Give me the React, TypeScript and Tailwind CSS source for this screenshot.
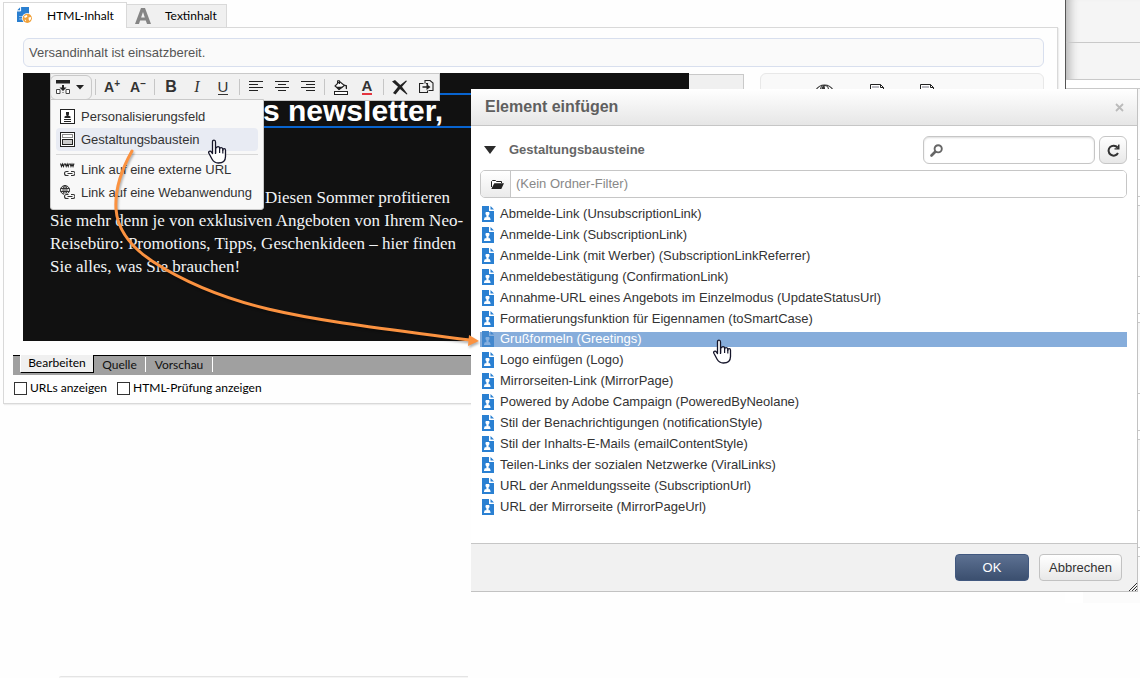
import React from "react";

const arial = "font-['Liberation_Sans',Arial,sans-serif]";
const segoe = "font-['Lato','Open_Sans',sans-serif]";

const blocks = [
  "Abmelde-Link (UnsubscriptionLink)",
  "Anmelde-Link (SubscriptionLink)",
  "Anmelde-Link (mit Werber) (SubscriptionLinkReferrer)",
  "Anmeldebestätigung (ConfirmationLink)",
  "Annahme-URL eines Angebots im Einzelmodus (UpdateStatusUrl)",
  "Formatierungsfunktion für Eigennamen (toSmartCase)",
  "Grußformeln (Greetings)",
  "Logo einfügen (Logo)",
  "Mirrorseiten-Link (MirrorPage)",
  "Powered by Adobe Campaign (PoweredByNeolane)",
  "Stil der Benachrichtigungen (notificationStyle)",
  "Stil der Inhalts-E-Mails (emailContentStyle)",
  "Teilen-Links der sozialen Netzwerke (ViralLinks)",
  "URL der Anmeldungsseite (SubscriptionUrl)",
  "URL der Mirrorseite (MirrorPageUrl)",
];
const selectedBlock = "Grußformeln (Greetings)";

function HtmlTabIcon() {
  return (
    <svg width="16" height="17" viewBox="0 0 16 17" aria-hidden="true">
      <path d="M4 0h8v15H0V4h4z" fill="#2a7fd0" />
      <path d="M0 3.4L3.4 0v3.4z" fill="#2a7fd0" />
      <path d="M3.6 0v4H0" fill="none" stroke="#fff" strokeWidth=".9" />
      <path d="M2 9.5h4M2 12h3" stroke="#8fbde8" />
      <circle cx="10.3" cy="11.3" r="5.4" fill="#fff" />
      <circle cx="10.3" cy="11.3" r="4.6" fill="#f0a13a" />
      <path d="M7.300 8.900l2.600-.8.5 1.400-1.600 1.300-1.500-.2zM11.500 10.500l2.400-.5.1 1.900-1.500 2-.8-1.500zM7.600 12.400l1.600.6-.4 1.500z" fill="#fff" />
    </svg>
  );
}

function BlockIcon({ faded = false }: { faded?: boolean }) {
  return (
    <svg width="12" height="16" viewBox="0 0 12 16" aria-hidden="true" className="shrink-0">
      <path d="M0 0h7v5h5v11H0z" fill={faded ? "#4287cd" : "#2a80d2"} />
      <path d="M8.500 0L12 3.500H8.500z" fill={faded ? "#4287cd" : "#2a80d2"} />
      <path
        d="M5 6h2l.5.800v1.400L6.600 9.300v1.900H8V12.500H8.500V14H2v-1.500h.6v-1.300h1.800V9.300l-.9-1.100V6.800L4 6z"
        fill={faded ? "#86b0e0" : "#fff"}
      />
    </svg>
  );
}

function Hand() {
  return (
    <svg width="19" height="25" viewBox="0 0 19 25" aria-hidden="true">
      <path
        d="M7.500 15V3c0-2.600-3-2.600-3 0v11.500l-1-1.400c-1.300-1.800-3.500-.7-2.600 1.200l3.200 6c1.400 2.500 3 3.700 6.200 3.700 4.600 0 7.200-2.400 7.200-6.500V11.300c0-2.200-2.700-2.200-2.700 0V10.300c0-2.300-3.200-2.300-3.200-.2V9.300c0-2.200-3.100-2.200-3.100 0"
        fill="#fff"
        stroke="#15152a"
        strokeWidth="1.300"
        strokeLinejoin="round"
      />
      <path d="M7.600 9v5M11.600 9.500v4.500M14.800 10.500v4" stroke="#15152a" strokeWidth="1.200" />
    </svg>
  );
}

function AlignIcon({ rows }: { rows: [number, number][] }) {
  return (
    <svg width="14" height="12" viewBox="0 0 14 12" aria-hidden="true">
      {rows.map(([x, w], i) => (
        <rect key={i} x={x} y={i * 3} width={w} height="1" fill="#222" />
      ))}
    </svg>
  );
}

function ToolButton({ label, children }: { label: string; children: React.ReactNode }) {
  return (
    <button type="button" aria-label={label} className="flex h-full w-[26px] items-center justify-center">
      {children}
    </button>
  );
}

function Divider() {
  return <span className="mx-[3px] h-4 w-px bg-[#c6c6c6]" />;
}

function ChainLink() {
  return (
    <path
      d="M8.500 9.500H6.500a2 2 0 000 4h2M11 9.500h2a2 2 0 010 4h-2M7.500 11.500h5"
      fill="none"
      stroke="#333"
      strokeWidth="1.100"
    />
  );
}

function MenuItem({ icon, label, active = false }: { icon: React.ReactNode; label: string; active?: boolean }) {
  return (
    <li>
      <button
        type="button"
        className={`flex h-[23px] w-full items-center gap-[6px] rounded pl-1 text-left ${active ? "bg-[#e8ebf3]" : ""}`}
      >
        {icon}
        <span>{label}</span>
      </button>
    </li>
  );
}

function InsertMenu() {
  return (
    <ul className="absolute top-[26px] left-[27px] w-[214px] rounded-b-[3px] border border-[#c9c9c9] bg-[#f8f8f8] px-[5px] pt-[5px] pb-[5px] text-[13px] text-[#333]">
      <MenuItem
        label="Personalisierungsfeld"
        icon={
          <svg width="15" height="15" viewBox="0 0 15 15" aria-hidden="true">
            <rect x=".5" y=".5" width="14" height="14" fill="#fff" stroke="#222" />
            <path d="M6 3h3v2.500L8.200 6.500 10.500 7.500V9h-6V7.500l2.300-1L6 5.500z" fill="#222" />
            <path d="M4 10h7v1H4zM4 12h7v1H4z" fill="#222" />
          </svg>
        }
      />
      <MenuItem
        active
        label="Gestaltungsbaustein"
        icon={
          <svg width="15" height="15" viewBox="0 0 15 15" aria-hidden="true">
            <rect x=".5" y=".5" width="14" height="14" fill="#fff" stroke="#222" />
            <rect x="2.500" y="2.500" width="10" height="3" fill="#fff" stroke="#888" />
            <rect x="2.500" y="7.500" width="10" height="5" fill="#ccc" stroke="#222" />
          </svg>
        }
      />
      <li aria-hidden="true" className="my-[3px] h-px bg-[#d8d8d8]" />
      <MenuItem
        label="Link auf eine externe URL"
        icon={
          <svg width="15" height="15" viewBox="0 0 15 15" aria-hidden="true">
            <path
              d="M.5 1.500l1 3 1-2.500 1 2.500 1-3M5.200 1.500l1 3 1-2.500 1 2.500 1-3M10 1.500l1 3 1-2.500 1 2.500 1-3"
              fill="none"
              stroke="#222"
              strokeWidth="1.100"
            />
            <ChainLink />
          </svg>
        }
      />
      <MenuItem
        label="Link auf eine Webanwendung"
        icon={
          <svg width="15" height="15" viewBox="0 0 15 15" aria-hidden="true">
            <circle cx="5" cy="5" r="4.500" fill="none" stroke="#333" />
            <ellipse cx="5" cy="5" rx="2" ry="4.500" fill="none" stroke="#333" />
            <path d="M.5 3.500h9M.5 6.500h9M5 .5v9" stroke="#333" />
            <rect x="4" y="8.500" width="11" height="6" fill="#f8f8f8" />
            <ChainLink />
          </svg>
        }
      />
    </ul>
  );
}

function Toolbar() {
  return (
    <div className="absolute top-0 left-[27px] flex h-7 items-center border border-[#c9c9c9] bg-[#f1f1f1] text-[#333]">
      <button
        type="button"
        aria-label="Einfügen"
        className="-ml-px flex h-[25px] w-[42px] items-center gap-[6px] rounded-md border border-[#c9c9c9] pl-[5px]"
      >
        <svg width="14" height="14" viewBox="0 0 14 14" aria-hidden="true">
          <path d="M0 0h14v3.500H0zM6 5h2v2.500h2.500L7 11 3.500 7.500H6z" fill="#222" />
          <path d="M.5 9.500h3.500v4H.5zM10 9.500h3.500v4H10z" fill="#fff" stroke="#444" />
          <path d="M6.500 12.500h1" stroke="#444" />
        </svg>
        <svg width="8" height="5" viewBox="0 0 8 5" aria-hidden="true">
          <path d="M0 0h8L4 4.500z" fill="#222" />
        </svg>
      </button>
      <Divider />
      <ToolButton label="Schrift vergrößern">
        <span className="flex text-[14px] leading-4 font-bold">
          A<sup className="top-0 text-[10px] leading-[9px]">+</sup>
        </span>
      </ToolButton>
      <ToolButton label="Schrift verkleinern">
        <span className="flex text-[14px] leading-4 font-bold">
          A<sup className="top-0 text-[10px] leading-[9px]">−</sup>
        </span>
      </ToolButton>
      <Divider />
      <ToolButton label="Fett">
        <span className="text-[16px] leading-4 font-bold">B</span>
      </ToolButton>
      <ToolButton label="Kursiv">
        <span className="font-['Liberation_Serif',serif] text-[16px] leading-4 italic">I</span>
      </ToolButton>
      <ToolButton label="Unterstrichen">
        <span className="border-b border-[#333] text-[15px] leading-[14px]">U</span>
      </ToolButton>
      <Divider />
      <ToolButton label="Linksbündig">
        <AlignIcon rows={[[0, 14], [0, 9], [0, 14], [0, 9]]} />
      </ToolButton>
      <ToolButton label="Zentriert">
        <AlignIcon rows={[[0, 14], [3, 8], [0, 14], [3, 8]]} />
      </ToolButton>
      <ToolButton label="Rechtsbündig">
        <AlignIcon rows={[[0, 14], [5, 9], [0, 14], [5, 9]]} />
      </ToolButton>
      <Divider />
      <ToolButton label="Hintergrundfarbe">
        <svg width="16" height="15" viewBox="0 0 16 15" aria-hidden="true">
          <path d="M6.500 1.500l5 4-5.500 4L2 6z" fill="#fff" stroke="#222" strokeWidth="1.100" />
          <path d="M3 6.800h7.500L6 10zM11 4.500l3 .8v4l-1.300-.5V6.500z" fill="#222" />
          <path d="M4.500 4V.7h2V4" fill="none" stroke="#222" />
          <rect x="1.500" y="11.500" width="13" height="3" fill="#fff" stroke="#222" />
        </svg>
      </ToolButton>
      <ToolButton label="Schriftfarbe">
        <span className="border-b-2 border-[#e5353f] text-[15px] leading-[14px] font-bold">A</span>
      </ToolButton>
      <Divider />
      <ToolButton label="Formatierung entfernen">
        <svg width="16" height="15" viewBox="0 0 16 15" aria-hidden="true">
          <path d="M0 1.500L3 0l5.300 5L14 .5l1 .5-5 5.800 5.500 7.200-.8.5L8 9l-4.500 5.500-2.500-1.500 5-6.200z" fill="#222" />
        </svg>
      </ToolButton>
      <ToolButton label="Inhalt übernehmen">
        <svg width="15" height="14" viewBox="0 0 15 14" aria-hidden="true">
          <path d="M6 3.500V.5h5l3 2.500v7.500H9.500M4.500 3.500h-4v9h8v-2M8.500 5V3.500H7" fill="none" stroke="#222" strokeWidth="1.100" />
          <path d="M3.500 6.200h4V4l4 3-4 3V7.800h-4z" fill="#222" />
        </svg>
      </ToolButton>
    </div>
  );
}

function PreviewPanel() {
  return (
    <div className="flex w-[284px] shrink-0 items-start gap-9 rounded-md border border-[#e8e8e8] bg-[#f9f9f9] pt-[10px] pl-[54px]">
      <svg width="19" height="12" viewBox="0 0 19 12" aria-hidden="true">
        <path d="M.5 6.500C5-.8 14-.8 18.500 6.500C14 13 5 13 .5 6.500z" fill="#fff" stroke="#333" strokeWidth="1.100" />
        <circle cx="9.500" cy="5.500" r="4" fill="none" stroke="#333" strokeWidth="1.100" />
        <path d="M9.500 1.500a4 4 0 00-2.500 6h3V4.500z" fill="#333" />
      </svg>
      {[0, 1].map((i) => (
        <svg key={i} width="14" height="16" viewBox="0 0 14 16" aria-hidden="true">
          <path d="M.5.5h10l3 3v12H.5z" fill="#fff" stroke="#222" />
          <path d="M10.500.5v3h3" fill="none" stroke="#222" />
          <path d="M2 3h7" stroke="#b9b9c0" strokeWidth="2" />
        </svg>
      ))}
    </div>
  );
}

function EditorWindow() {
  return (
    <main className="min-w-0 flex-1 pt-[2px] pr-[7px] pl-[3px]">
      <div role="tablist" className={`flex h-[25px] items-end text-[12px] text-black ${segoe}`}>
        <button
          type="button"
          role="tab"
          aria-selected="true"
          className="relative -mb-px flex h-[26px] w-[124px] items-center gap-[14px] border border-b-0 border-[#d9d9d9] bg-white pl-[13px]"
        >
          <HtmlTabIcon />
          HTML-Inhalt
        </button>
        <button
          type="button"
          role="tab"
          aria-selected="false"
          className="-ml-px flex h-[23px] w-[101px] items-center gap-[14px] border border-b-0 border-[#d9d9d9] bg-[#f0f0f0] pl-2"
        >
          <svg width="16" height="16" viewBox="0 0 16 16" aria-hidden="true">
            <path d="M0 16L6 0h4l6 16h-4l-1.200-3.500H5.100L4 16zM6.100 9.500h3.700L8 4z" fill="#858585" fillRule="evenodd" />
          </svg>
          Textinhalt
        </button>
      </div>

      <div className="border border-[#d9d9d9] pt-[10px] shadow-[1px_1px_1px_#eeeeee]">
        <p className="mr-[13px] ml-[19px] flex h-[29px] items-center rounded-md border border-[#d8dfee] bg-[#fafafa] pl-[5px] text-[13px] text-[#555]">
          Versandinhalt ist einsatzbereit.
        </p>

        <div className="mt-[6px] mr-[13px] ml-[19px] flex gap-4">
          <div className="relative flex h-[268px] min-w-0 flex-1">
            <article className="min-w-0 flex-1 overflow-hidden bg-[#111] pt-5 text-white">
              <h1 className="ml-[240px] border-y-2 border-[#0864d0] text-[30px] leading-[31px] font-bold whitespace-nowrap">
                s newsletter,
              </h1>
              <p className="mt-[58px] pl-[27px] indent-[215px] font-['Liberation_Serif','Times_New_Roman',serif] text-[17px] leading-[23px] whitespace-nowrap text-[#f1f4f6]">
                Diesen Sommer profitieren
                <br />
                <span className="block indent-0">
                  Sie mehr denn je von exklusiven Angeboten von Ihrem Neo-
                  <br />
                  Reisebüro: Promotions, Tipps, Geschenkideen – hier finden
                  <br />
                  Sie alles, was Sie brauchen!
                </span>
              </p>
            </article>
            <aside className="mt-px w-[55px] border-t border-r border-[#c9c9c9] bg-[#f0f0f0]" />
            <Toolbar />
            <InsertMenu />
            <span className="absolute top-[66px] left-[185px]">
              <Hand />
            </span>
          </div>
          <PreviewPanel />
        </div>

        <div className={`mt-[14px] ml-[9px] flex h-5 items-start border-t border-black bg-[#a0a0a0] pl-[7px] text-[12px] leading-4 ${segoe}`}>
          <button type="button" className="-mt-px h-[18px] w-[74px] border-r border-b border-l border-black border-l-white bg-[#f0f0f0] pb-[2px] text-black">
            Bearbeiten
          </button>
          <button type="button" className="mt-px h-[15px] w-[52px] border-r border-white pb-[2px] text-[#111]">
            Quelle
          </button>
          <button type="button" className="mt-px h-[15px] w-[67px] border-r border-white pb-[2px] text-[#111]">
            Vorschau
          </button>
        </div>

        <div className={`flex h-7 items-center gap-[10px] pb-[2px] pl-[10px] text-[12px] text-black ${segoe}`}>
          {["URLs anzeigen", "HTML-Prüfung anzeigen"].map((label) => (
            <label key={label} className="flex items-center gap-[3px]">
              <input type="checkbox" className="size-[13px] appearance-none border border-[#333] bg-white" />
              {label}
            </label>
          ))}
        </div>
      </div>
    </main>
  );
}

function Backdrop() {
  const line = "border-b border-[#c9c9c9]";
  return (
    <div className="w-[75px] shrink-0 bg-white">
      <div className="border-l border-[#555]">
        <div className="bg-[#f5f5f5] shadow-[inset_12px_0_10px_-8px_#b5b5b5]">
          <div className={`h-[43px] ${line}`} />
          <div className={`h-[37px] ${line}`} />
        </div>
        <div className={`h-[9px] ${line}`} />
      </div>
      {[0, 1, 2, 3].map((row) => (
        <div key={row}>
          <div className={`h-[71px] bg-linear-to-b from-[#f6f6f6] to-white ${line}`} />
          <div className={`h-[37px] ${line}`} />
          <div className={`h-[9px] ${line}`} />
        </div>
      ))}
      <div className="ml-[18px] h-[46px] bg-[#fbfbfb]" />
    </div>
  );
}

function InsertDialog() {
  return (
    <section
      role="dialog"
      aria-label="Element einfügen"
      className="absolute top-[89px] right-[2px] left-[471px] flex flex-col border-r border-b border-[#c2c2c2] bg-white"
    >
      <header className="flex h-[37px] items-center justify-between border-b border-[#c6c6c6] bg-linear-to-b from-white to-[#e6e6e6] pr-[13px] pl-[14px]">
        <h2 className="text-[16px] font-bold text-[#5f5f5f]">Element einfügen</h2>
        <button type="button" aria-label="Schließen">
          <svg width="9" height="9" viewBox="0 0 9 9" aria-hidden="true">
            <path d="M1 1l7 7M8 1L1 8" stroke="#bbb" strokeWidth="1.800" />
          </svg>
        </button>
      </header>

      <div className="h-[417px] pt-[10px] pr-[10px] pl-[9px]">
        <div className="flex items-center gap-1">
          <button type="button" className="flex flex-1 items-center gap-[13px] pl-1 text-left text-[13px] font-bold text-[#666]">
            <svg width="12" height="8" viewBox="0 0 12 8" aria-hidden="true">
              <path d="M0 0h12L6 8z" fill="#2b2b2b" />
            </svg>
            Gestaltungsbausteine
          </button>
          <label className="flex h-7 w-[172px] items-center rounded-md border border-[#c6c6c6] bg-white pl-[6px] shadow-[inset_0_1px_2px_#dddddd]">
            <svg width="13" height="13" viewBox="0 0 13 13" aria-hidden="true">
              <circle cx="8.200" cy="4.800" r="3.600" fill="none" stroke="#666" strokeWidth="1.900" />
              <path d="M5 8L1.500 11.500" stroke="#666" strokeWidth="2.600" strokeLinecap="round" />
            </svg>
            <input type="text" aria-label="Suchen" className="min-w-0 flex-1 bg-transparent px-1 text-[13px] outline-none" />
          </label>
          <button
            type="button"
            aria-label="Aktualisieren"
            className="flex size-7 items-center justify-center rounded-md border border-[#c6c6c6] bg-linear-to-b from-white to-[#e8e8e8]"
          >
            <svg width="13" height="13" viewBox="0 0 13 13" aria-hidden="true">
              <path d="M10.500 3.500A5 5 0 1011 9" fill="none" stroke="#333" strokeWidth="2" />
              <path d="M12.500.5V5.500H7.500V4.200h2.500L11.300.5z" fill="#333" />
            </svg>
          </button>
        </div>

        <div className="mt-[6px] flex h-7 overflow-hidden rounded-[5px] border border-[#c6c6c6]">
          <button
            type="button"
            aria-label="Ordner wählen"
            className="flex w-[30px] items-center justify-center border-r border-[#c6c6c6] bg-linear-to-b from-white to-[#ebebeb] pl-[3px]"
          >
            <svg width="13" height="9" viewBox="0 0 13 9" aria-hidden="true">
              <path d="M.5 7V1.500l1-1h3l1 1h5V3" fill="#fff" stroke="#222" />
              <path d="M3.300 3.300H13L10.300 9H.3z" fill="#222" />
            </svg>
          </button>
          <input
            type="text"
            aria-label="Ordner-Filter"
            placeholder="(Kein Ordner-Filter)"
            className="min-w-0 flex-1 bg-white px-[5px] text-[13px] outline-none placeholder:text-[#888]"
          />
        </div>

        <ul className="mt-[5px] text-[13px] text-[#333]">
          {blocks.map((name) => {
            const selected = name === selectedBlock;
            return (
              <li key={name} className={`flex items-center ${selected ? "h-5" : "h-[21px]"}`}>
                <button
                  type="button"
                  className={`flex h-[15px] w-full items-center gap-[6px] pl-[2px] text-left ${selected ? "bg-[#86addb] text-white" : ""}`}
                >
                  <BlockIcon faded={selected} />
                  <span>{name}</span>
                </button>
              </li>
            );
          })}
        </ul>
      </div>

      <footer className="relative flex h-12 items-center justify-end gap-[10px] border-t border-[#c6c6c6] bg-[#f1f1f1] pr-[15px] text-[13px]">
        <button
          type="button"
          className="h-[27px] w-[74px] rounded border border-[#41587f] bg-linear-to-b from-[#5d7192] to-[#3b4f6f] text-white"
        >
          OK
        </button>
        <button
          type="button"
          className="h-[27px] w-[83px] rounded border border-[#c2c2c2] bg-linear-to-b from-white to-[#e8e8e8] text-[#333]"
        >
          Abbrechen
        </button>
        <svg width="8" height="8" viewBox="0 0 8 8" aria-hidden="true" className="absolute right-0 bottom-0">
          <path d="M0 8L8 0M3 8l5-5M6 8l2-2" stroke="#333" />
        </svg>
      </footer>
      <span className="absolute top-[250px] left-[242px]">
        <Hand />
      </span>
    </section>
  );
}

function Connector() {
  return (
    <svg
      width="380"
      height="210"
      viewBox="105 145 380 210"
      aria-hidden="true"
      className="pointer-events-none absolute top-[145px] left-[105px] drop-shadow-[1px_2px_1px_rgba(0,0,0,0.3)]"
    >
      <path
        d="M132 151C119 174 115 193 116 209C118 238 143 255 152 261C230 312 310 319 470 340"
        fill="none"
        stroke="#fb9240"
        strokeWidth="3"
        strokeLinecap="round"
      />
      <path d="M469 335l10 6-11 5z" fill="#fb9240" />
    </svg>
  );
}

export default function App() {
  return (
    <div className={`relative flex min-h-screen flex-col overflow-hidden bg-[#fefefe] ${arial}`}>
      <div className="flex items-start">
        <EditorWindow />
        <Backdrop />
      </div>
      <div className="mt-auto mr-[672px] ml-[59px] h-[2px] rounded-tl border-t border-[#e4e4e4] bg-[#f5f5f5]" />
      <InsertDialog />
      <Connector />
    </div>
  );
}
